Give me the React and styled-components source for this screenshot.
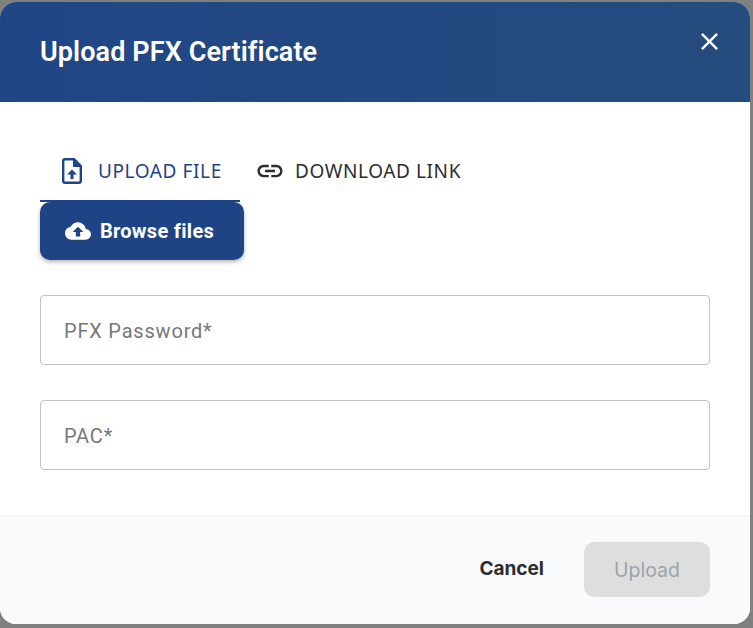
import React from 'react';
import styled, { createGlobalStyle } from 'styled-components';
import { MdClose, MdLink, MdCloudUpload } from 'react-icons/md';

const GlobalStyle = createGlobalStyle`
  html, body {
    margin: 0;
    background: #808080;
  }
`;

const TABS = [
  { label: 'UPLOAD FILE', icon: <FileIcon />, active: true },
  { label: 'DOWNLOAD LINK', icon: <MdLink size={30} /> }
];

export default function App() {
  return (
    <Page>
      <GlobalStyle />
      <Modal>
        <Header>
          <Title>Upload PFX Certificate</Title>
          <CloseButton aria-label="Close">
            <MdClose size={29} />
          </CloseButton>
        </Header>
        <Body>
          <Tabs>
            {TABS.map((tab) => (
              <Tab key={tab.label} $active={tab.active}>
                {tab.icon}
                {tab.label}
              </Tab>
            ))}
          </Tabs>
          <BrowseButton>
            <MdCloudUpload size={26} />
            Browse files
          </BrowseButton>
          <Fields>
            <Input placeholder="PFX Password*" />
            <Input placeholder="PAC*" />
          </Fields>
        </Body>
        <Footer>
          <CancelButton>Cancel</CancelButton>
          <UploadButton disabled>Upload</UploadButton>
        </Footer>
      </Modal>
    </Page>
  );
}

function FileIcon() {
  return (
    <svg width="20" height="26" viewBox="0 0 20 26" fill="none">
      <path
        d="M3 1.2H12L18.8 8V22.8C18.8 23.9 17.9 24.8 16.8 24.8H3C1.9 24.8 1.2 23.9 1.2 22.8V3C1.2 1.9 1.9 1.2 3 1.2Z"
        stroke="currentColor"
        strokeWidth="2.4"
        strokeLinejoin="round"
      />
      <path d="M11.5 2V8.5H18" fill="currentColor" stroke="currentColor" strokeWidth="1" />
      <path d="M10 11.5L15 16.5H11.5V21H8.5V16.5H5L10 11.5Z" fill="currentColor" />
    </svg>
  );
}

const Page = styled.div`
  width: 753px;
  height: 628px;
  padding-top: 2px;
  box-sizing: border-box;
  overflow: hidden;
`;

const Modal = styled.div`
  width: 750px;
  height: 622px;
  display: flex;
  flex-direction: column;
  background: #fff;
  border-radius: 16px;
  overflow: hidden;
`;

const Header = styled.header`
  height: 100px;
  flex: none;
  display: flex;
  align-items: flex-start;
  justify-content: space-between;
  padding: 0 26px 0 40px;
  background: linear-gradient(90deg, #204686, #264b7e);
  color: #fff;
`;

const Title = styled.h1`
  margin: 33px 0 0;
  font: 600 27px/34px Roboto, "Liberation Sans", sans-serif;
  letter-spacing: 0.1px;
`;

const CloseButton = styled.button`
  display: flex;
  margin-top: 25px;
  padding: 0;
  border: 0;
  background: none;
  color: #fff;
`;

const Body = styled.main`
  flex: 1;
  padding: 40px 40px 0;
`;

const Tabs = styled.div`
  display: flex;
  height: 60px;
`;

const Tab = styled.div`
  display: flex;
  align-items: center;
  gap: ${(p) => (p.$active ? '16px' : '10px')};
  width: ${(p) => (p.$active ? '200px' : 'auto')};
  padding: ${(p) => (p.$active ? '0 0 0 22px' : '0 15px')};
  box-sizing: border-box;
  border-bottom: 2px solid ${(p) => (p.$active ? '#1f4485' : 'transparent')};
  color: ${(p) => (p.$active ? '#1f4485' : '#2b2d30')};
  font: 400 19px/24px "Noto Sans", sans-serif;
  letter-spacing: 0.6px;
`;

const BrowseButton = styled.button`
  display: flex;
  align-items: center;
  justify-content: center;
  gap: 9px;
  width: 204px;
  height: 58px;
  padding: 0 5px 0 0;
  border: 0;
  border-radius: 10px;
  background: #1f4485;
  box-shadow: 0 2px 4px rgba(0, 0, 0, 0.3);
  color: #fff;
  font: 700 20px/24px Roboto, sans-serif;
  letter-spacing: 0.3px;
`;

const Fields = styled.div`
  display: flex;
  flex-direction: column;
  gap: 35px;
  margin-top: 35px;
`;

const Input = styled.input`
  width: 100%;
  height: 70px;
  box-sizing: border-box;
  padding: 2px 23px 0;
  border: 1px solid #bfc1c4;
  border-radius: 4px;
  background: #fff;
  font: 400 20px/24px Roboto, sans-serif;
  letter-spacing: 0.8px;

  &::placeholder {
    color: #787878;
    opacity: 1;
  }
`;

const Footer = styled.footer`
  height: 109px;
  flex: none;
  display: flex;
  align-items: flex-start;
  justify-content: flex-end;
  gap: 40px;
  padding: 26px 40px 0;
  box-sizing: border-box;
  background: #f9fafc;
  border-top: 1px solid #f1f2f4;
`;

const CancelButton = styled.button`
  height: 53px;
  padding: 0;
  border: 0;
  background: none;
  color: #2b2d30;
  font: 700 19px/24px Inter, sans-serif;
`;

const UploadButton = styled.button`
  width: 126px;
  height: 55px;
  padding: 0;
  border: 0;
  border-radius: 10px;
  background: #dddfdf;
  color: #9ca3af;
  font: 400 19.5px/24px Inter, sans-serif;
`;
